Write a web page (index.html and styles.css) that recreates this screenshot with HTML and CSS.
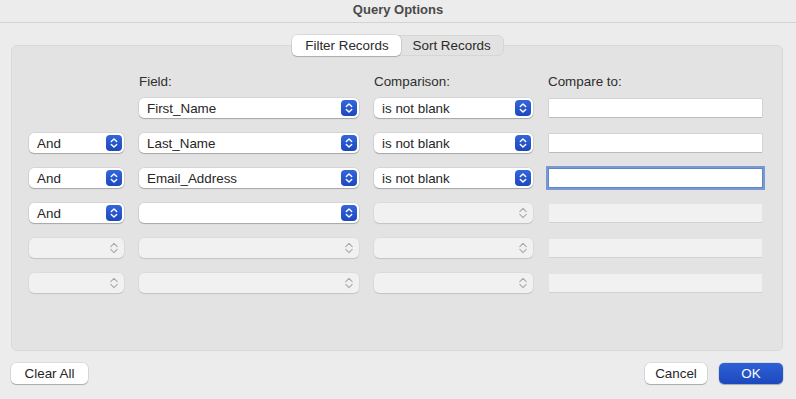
FILE: index.html
```html
<html lang="en">
  <head>
    <meta charset="UTF-8" />
    <meta name="viewport" content="width=device-width, initial-scale=1.0" />
    <title>Query Options</title>
    <link rel="stylesheet" href="styles.css">
  </head>
  <body>
    <div class="titlebar">Query Options</div>

    <div class="tabs">
      <div class="tab active">Filter Records</div>
      <div class="tab">Sort Records</div>
    </div>

    <div class="panel">
      <div class="grid head">
        <div></div>
        <div class="label">Field:</div>
        <div class="label">Comparison:</div>
        <div class="label">Compare to:</div>
      </div>

      <div class="grid rows">
        <!-- row 1 -->
        <div></div>
        <div class="popup">First_Name<span class="arrows"><svg viewBox="0 0 16 16"><path d="M5.3 6.6 8 3.9l2.7 2.7M5.3 9.4 8 12.1l2.7-2.7"/></svg></span></div>
        <div class="popup">is not blank<span class="arrows"><svg viewBox="0 0 16 16"><path d="M5.3 6.6 8 3.9l2.7 2.7M5.3 9.4 8 12.1l2.7-2.7"/></svg></span></div>
        <div class="field"></div>

        <!-- row 2 -->
        <div class="popup">And<span class="arrows"><svg viewBox="0 0 16 16"><path d="M5.3 6.6 8 3.9l2.7 2.7M5.3 9.4 8 12.1l2.7-2.7"/></svg></span></div>
        <div class="popup">Last_Name<span class="arrows"><svg viewBox="0 0 16 16"><path d="M5.3 6.6 8 3.9l2.7 2.7M5.3 9.4 8 12.1l2.7-2.7"/></svg></span></div>
        <div class="popup">is not blank<span class="arrows"><svg viewBox="0 0 16 16"><path d="M5.3 6.6 8 3.9l2.7 2.7M5.3 9.4 8 12.1l2.7-2.7"/></svg></span></div>
        <div class="field"></div>

        <!-- row 3 -->
        <div class="popup">And<span class="arrows"><svg viewBox="0 0 16 16"><path d="M5.3 6.6 8 3.9l2.7 2.7M5.3 9.4 8 12.1l2.7-2.7"/></svg></span></div>
        <div class="popup">Email_Address<span class="arrows"><svg viewBox="0 0 16 16"><path d="M5.3 6.6 8 3.9l2.7 2.7M5.3 9.4 8 12.1l2.7-2.7"/></svg></span></div>
        <div class="popup">is not blank<span class="arrows"><svg viewBox="0 0 16 16"><path d="M5.3 6.6 8 3.9l2.7 2.7M5.3 9.4 8 12.1l2.7-2.7"/></svg></span></div>
        <div class="field focus"></div>

        <!-- row 4 -->
        <div class="popup">And<span class="arrows"><svg viewBox="0 0 16 16"><path d="M5.3 6.6 8 3.9l2.7 2.7M5.3 9.4 8 12.1l2.7-2.7"/></svg></span></div>
        <div class="popup"><span class="arrows"><svg viewBox="0 0 16 16"><path d="M5.3 6.6 8 3.9l2.7 2.7M5.3 9.4 8 12.1l2.7-2.7"/></svg></span></div>
        <div class="popup off"><span class="arrows"><svg viewBox="0 0 16 16"><path d="M4.8 6.6 8 3.4l3.2 3.2M4.8 9.4 8 12.6l3.2-3.2"/></svg></span></div>
        <div class="field off"></div>

        <!-- row 5 -->
        <div class="popup off"><span class="arrows"><svg viewBox="0 0 16 16"><path d="M4.8 6.6 8 3.4l3.2 3.2M4.8 9.4 8 12.6l3.2-3.2"/></svg></span></div>
        <div class="popup off"><span class="arrows"><svg viewBox="0 0 16 16"><path d="M4.8 6.6 8 3.4l3.2 3.2M4.8 9.4 8 12.6l3.2-3.2"/></svg></span></div>
        <div class="popup off"><span class="arrows"><svg viewBox="0 0 16 16"><path d="M4.8 6.6 8 3.4l3.2 3.2M4.8 9.4 8 12.6l3.2-3.2"/></svg></span></div>
        <div class="field off"></div>

        <!-- row 6 -->
        <div class="popup off"><span class="arrows"><svg viewBox="0 0 16 16"><path d="M4.8 6.6 8 3.4l3.2 3.2M4.8 9.4 8 12.6l3.2-3.2"/></svg></span></div>
        <div class="popup off"><span class="arrows"><svg viewBox="0 0 16 16"><path d="M4.8 6.6 8 3.4l3.2 3.2M4.8 9.4 8 12.6l3.2-3.2"/></svg></span></div>
        <div class="popup off"><span class="arrows"><svg viewBox="0 0 16 16"><path d="M4.8 6.6 8 3.4l3.2 3.2M4.8 9.4 8 12.6l3.2-3.2"/></svg></span></div>
        <div class="field off"></div>
      </div>
    </div>

    <div class="footer">
      <button class="btn clear">Clear All</button>
      <div class="right">
        <button class="btn cancel">Cancel</button>
        <button class="btn ok">OK</button>
      </div>
    </div>
  </body>
</html>
```

FILE: styles.css
```css
body {
  background: #ececec;
  margin: 0;
  font-family: "Liberation Sans", Arial, sans-serif;
  font-size: 13.4px;
  color: #262626;
}
.titlebar {
  height: 23px;
  line-height: 19px;
  text-align: center;
  font-weight: bold;
  font-size: 13px;
  color: #4a4a4a;
  border-bottom: 1px solid #d3d3d3;
  box-sizing: border-box;
}

/* segmented tabs */
.tabs {
  display: flex;
  width: max-content;
  margin: 12px auto -11px;
  height: 21px;
  background: #e2e2e2;
  border: 1px solid #d6d6d6;
  border-radius: 6px;
  box-sizing: border-box;
  position: relative;
  z-index: 1;
}
.tab {
  padding: 0 12px;
  line-height: 19px;
  color: #2a2a2a;
}
.tab.active {
  background: white;
  border-radius: 5px;
  margin: -1px 0 -1px -1px;
  line-height: 21px;
  padding: 0 12px 0 13px;
  box-shadow: 0 0 0 0.5px rgba(0, 0, 0, 0.15), 0 1px 1px rgba(0, 0, 0, 0.18);
}

/* group box */
.panel {
  margin: 0 13px 0 11px;
  height: 306px;
  background: #e3e3e3;
  border: 1px solid #d9d9d9;
  border-radius: 6px;
  padding: 28px 19px 0 17px;
  box-sizing: border-box;
}
.grid {
  display: grid;
  grid-template-columns: 95px 220px 159px 215px;
  column-gap: 15px;
}
.head {
  margin-bottom: 9px;
}
.label {
  line-height: 15px;
  color: #2e2e2e;
}
.rows {
  grid-auto-rows: 20px;
  row-gap: 15px;
}

/* popup buttons */
.popup {
  display: flex;
  align-items: center;
  justify-content: space-between;
  padding-left: 8px;
  background: white;
  border-radius: 5px;
  box-shadow: 0 0 0 0.5px rgba(0, 0, 0, 0.12), 0 1px 1px rgba(0, 0, 0, 0.22);
  white-space: nowrap;
}
.arrows {
  width: 16px;
  height: 16px;
  margin: 0 2px 0 auto;
  border-radius: 4px;
  background: linear-gradient(#3466da, #1c48bd);
}
.arrows svg {
  display: block;
  width: 16px;
  height: 16px;
  fill: none;
  stroke: white;
  stroke-width: 1.4;
  stroke-linecap: round;
  stroke-linejoin: round;
}
.popup.off {
  background: #f1f1f1;
  box-shadow: 0 0 0 0.5px rgba(0, 0, 0, 0.06), 0 1px 1px rgba(0, 0, 0, 0.12);
}
.popup.off .arrows {
  background: none;
}
.popup.off .arrows svg {
  stroke: #a9a9a9;
  stroke-width: 1.1;
}

/* text fields */
.field {
  margin: 1px;
  background: white;
  box-shadow: 0 0 0 0.5px rgba(0, 0, 0, 0.14), 0 1px 0 rgba(0, 0, 0, 0.1);
}
.field.focus {
  box-shadow: 0 0 0 1px #5f86c6, 0 0 0 3px #7899d1;
}
.field.off {
  background: #f1f1f1;
  box-shadow: 0 1px 0 rgba(0, 0, 0, 0.08);
}

/* bottom buttons */
.footer {
  display: flex;
  justify-content: space-between;
  margin: 12px 13px 0 11px;
}
.right {
  display: flex;
  gap: 12px;
}
.btn {
  height: 21px;
  border: 0;
  border-radius: 5px;
  background: white;
  font-family: "Liberation Sans", Arial, sans-serif;
  font-size: 13.4px;
  color: #262626;
  padding: 0;
  box-shadow: 0 0 0 0.5px rgba(0, 0, 0, 0.14), 0 1px 1px rgba(0, 0, 0, 0.22);
}
.clear {
  width: 77px;
}
.cancel {
  width: 62px;
}
.ok {
  width: 64px;
  color: white;
  background: linear-gradient(#2f60d6, #1c49bd);
}
```
